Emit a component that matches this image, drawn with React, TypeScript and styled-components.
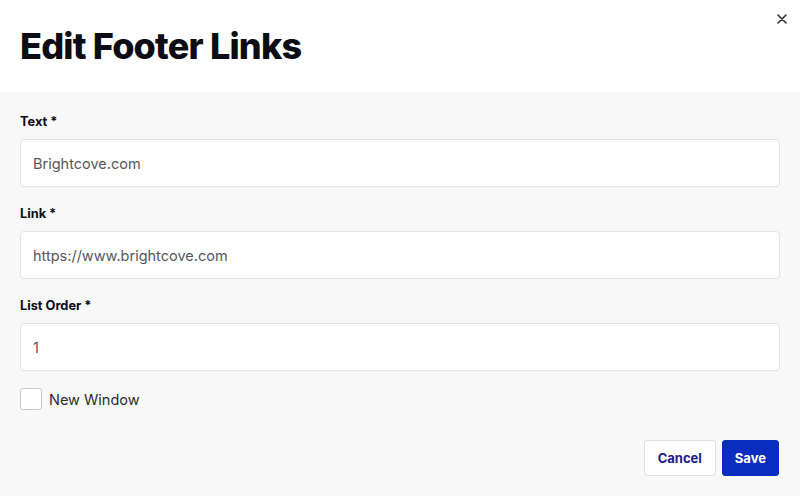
import React from "react";
import styled, { createGlobalStyle } from "styled-components";

const GlobalStyle = createGlobalStyle`
    html, body {
        margin: 0;
        padding: 0;
        background: #f8f8f8;
    }
    body {
        font-family: Inter, "Noto Sans", "Liberation Sans", sans-serif;
        color: #0b0c14;
    }
    * {
        box-sizing: border-box;
    }
`;

/** The modal shell */
const Modal = styled.div`
    width: 800px;
    height: 496px;
    display: flex;
    flex-direction: column;
    background: #f8f8f8;
`;

/** The white header with the title */
const Header = styled.header`
    position: relative;
    height: 92px;
    background: #ffffff;
    padding: 0 20px;
    display: flex;
    align-items: center;
`;

const Title = styled.h1`
    margin: 0;
    font-size: 36px;
    font-weight: 800;
    letter-spacing: -0.8px;
    color: #0b0c14;
`;

/** The x in the corner */
const CloseButton = styled.button`
    position: absolute;
    top: 12px;
    right: 11px;
    width: 14px;
    height: 14px;
    padding: 0;
    border: none;
    background: transparent;
    display: flex;
    align-items: center;
    justify-content: center;
    cursor: pointer;
`;

const Body = styled.form`
    flex: 1;
    padding: 22px 20px 20px;
    display: flex;
    flex-direction: column;
`;

const Field = styled.div`
    display: flex;
    flex-direction: column;
    margin-bottom: 19px;
`;

const Label = styled.label`
    font-size: 12.8px;
    line-height: 16px;
    font-weight: 700;
    margin-bottom: 9px;
    color: #0b0c14;
`;

const Input = styled.input`
    height: 48px;
    width: 100%;
    padding: 0 12px;
    border: 1px solid #e3e3e3;
    border-radius: 4px;
    background: #ffffff;
    font-family: inherit;
    font-size: 14.5px;
    color: #55565c;
    outline: none;
`;

const CheckRow = styled.label`
    display: flex;
    align-items: center;
    gap: 7px;
    margin-top: -2px;
    font-size: 14.5px;
    color: #2a2b31;
`;

const CheckBox = styled.span`
    width: 22px;
    height: 22px;
    border: 1px solid #c9c9c9;
    border-radius: 3px;
    background: #ffffff;
`;

const Actions = styled.div`
    margin-top: auto;
    display: flex;
    justify-content: flex-end;
    gap: 6px;
    padding-right: 1px;
`;

interface IButtonProps {
    /** Whether this is the filled, main action */
    primary?: boolean;
}

const Button = styled.button<IButtonProps>`
    height: 36px;
    padding: 0 ${props => props.primary ? "12px" : "13px"};
    border-radius: 3px;
    font-family: inherit;
    font-size: 13px;
    font-weight: 700;
    cursor: pointer;
    border: 1px solid ${props => props.primary ? "#0a2cbf" : "#e0e0e0"};
    background: ${props => props.primary ? "#0a2cbf" : "#ffffff"};
    color: ${props => props.primary ? "#ffffff" : "#1b1a8a"};
`;

export default function App() {
    return (
        <>
            <GlobalStyle />
            <Modal>
                <Header>
                    <Title>Edit Footer Links</Title>
                    <CloseButton type="button" aria-label="Close">
                        <svg width="10" height="10" viewBox="0 0 10 10">
                            <path d="M1 1 L9 9 M9 1 L1 9" stroke="#2b2d3a" strokeWidth="1.6" strokeLinecap="round" />
                        </svg>
                    </CloseButton>
                </Header>
                <Body onSubmit={e => e.preventDefault()}>
                    <Field>
                        <Label>Text *</Label>
                        <Input defaultValue="Brightcove.com" />
                    </Field>
                    <Field>
                        <Label>Link *</Label>
                        <Input defaultValue="https://www.brightcove.com" />
                    </Field>
                    <Field>
                        <Label>List Order *</Label>
                        <Input defaultValue="1" />
                    </Field>
                    <CheckRow>
                        <CheckBox />
                        New Window
                    </CheckRow>
                    <Actions>
                        <Button type="button">Cancel</Button>
                        <Button type="submit" primary>Save</Button>
                    </Actions>
                </Body>
            </Modal>
        </>
    );
}
